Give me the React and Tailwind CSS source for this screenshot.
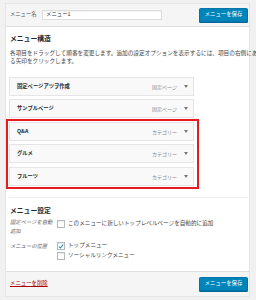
export default function App() {
  const Item = ({ title, kind, className = "" }) => (
    <div className={`flex h-[19px] items-center border border-[#e5e5e5] bg-[#f9f9f9] pl-[7px] pr-[5px] ${className}`}>
      <span className="text-[5.3px] font-bold leading-none text-[#23282d]">{title}</span>
      <span className="ml-auto text-[5px] leading-none text-[#888]">{kind}</span>
      <svg width="4" height="3" viewBox="0 0 4 3" className="ml-[7px]">
        <path d="M0 0 L4 0 L2 3 Z" fill="#777" />
      </svg>
    </div>
  );
  const Check = ({ checked }) => (
    <div className="flex h-[8px] w-[8px] shrink-0 items-center justify-center border border-[#b4b9be] bg-white shadow-[inset_0_1px_1px_rgba(0,0,0,0.08)]">
      {checked && (
        <svg width="7" height="7" viewBox="0 0 10 10">
          <path d="M1.5 5.2 L4 7.6 L8.6 1.6" fill="none" stroke="#1e8cbe" strokeWidth="1.8" />
        </svg>
      )}
    </div>
  );
  const Btn = () => (
    <div className="flex h-[14px] w-[49px] items-center justify-center rounded-[1.5px] border border-[#0073aa] bg-[#0085ba] text-[5.4px] leading-none text-white shadow-[0_1px_0_#006799]">
      メニューを保存
    </div>
  );
  return (
    <div className="h-[300px] w-[256px] bg-[#f1f1f1] pl-[5px] pt-[3px] font-['Noto_Sans_CJK_JP','Noto_Sans',sans-serif]">
      <div className="flex h-[294px] w-[245px] flex-col border border-[#e5e5e5] bg-white">
        <div className="flex h-[23px] items-center border-b border-[#dddddd] bg-[#f5f5f5] pl-[4px] pr-[1px]">
          <span className="w-[32px] text-[5.3px] leading-none text-[#555]">メニュー名</span>
          <div className="flex h-[10px] w-[120px] items-center border border-[#dddddd] bg-white pl-[3px] text-[5.4px] leading-none text-[#32373c] shadow-[inset_0_1px_1px_rgba(0,0,0,0.05)]">
            メニュー1
          </div>
          <div className="ml-auto">
            <Btn />
          </div>
        </div>
        <div className="flex flex-col pl-[4px] pr-[1px] pt-[6px]">
          <div className="h-[10px] text-[6.8px] font-bold leading-[10px] text-[#23282d]">メニュー構造</div>
          <div className="mt-[6px] text-[5.65px] leading-[8px] text-[#444]">
            <div className="whitespace-nowrap">各項目をドラッグして順番を変更します。追加の設定オプションを表示するには、項目の右側にあ</div>
            <div>る矢印をクリックします。</div>
          </div>
          <div className="-ml-[1px] mt-[12px] w-[185px]">
            <Item title="固定ページアツヲ作成" kind="固定ページ" />
            <Item title="サンプルページ" kind="固定ページ" className="mt-[3px]" />
          </div>
          <div className="-ml-[4px] mt-[1px] w-[193px] border-2 border-[#e81b22] pb-[1px] pl-[1px] pr-[3px] pt-[1px]">
            <Item title="Q&A" kind="カテゴリー" />
            <Item title="グルメ" kind="カテゴリー" className="mt-[3px]" />
            <Item title="フルーツ" kind="カテゴリー" className="mt-[4px]" />
          </div>
          <div className="-ml-[1px] mt-[8px] h-px w-[239px] bg-[#eeeeee]" />
          <div className="mt-[7px] h-[10px] text-[6.8px] font-bold leading-[10px] text-[#23282d]">メニュー設定</div>
          <div className="mt-[3px] flex">
            <div className="w-[47px] text-[5.3px] italic leading-[9px] text-[#666]">
              固定ページを自動<br />追加
            </div>
            <div className="mt-[2px]">
              <Check />
            </div>
            <span className="ml-[3px] mt-[0.5px] text-[5.6px] leading-[9px] text-[#444]">このメニューに新しいトップレベルページを自動的に追加</span>
          </div>
          <div className="mt-[5px] flex">
            <div className="w-[47px] text-[5.3px] italic leading-[10px] text-[#666]">メニューの位置</div>
            <div className="flex flex-col">
              <div className="flex h-[10px] items-center">
                <Check checked />
                <span className="ml-[3px] text-[5.6px] leading-none text-[#444]">トップメニュー</span>
              </div>
              <div className="flex h-[10px] items-center">
                <Check />
                <span className="ml-[3px] text-[5.6px] leading-none text-[#444]">ソーシャルリンクメニュー</span>
              </div>
            </div>
          </div>
        </div>
        <div className="mt-auto flex h-[25px] items-center border-t border-[#dddddd] bg-[#f5f5f5] pl-[4px] pr-[1px]">
          <span className="text-[5.4px] leading-none text-[#a00] underline">メニューを削除</span>
          <div className="ml-auto">
            <Btn />
          </div>
        </div>
      </div>
    </div>
  );
}
